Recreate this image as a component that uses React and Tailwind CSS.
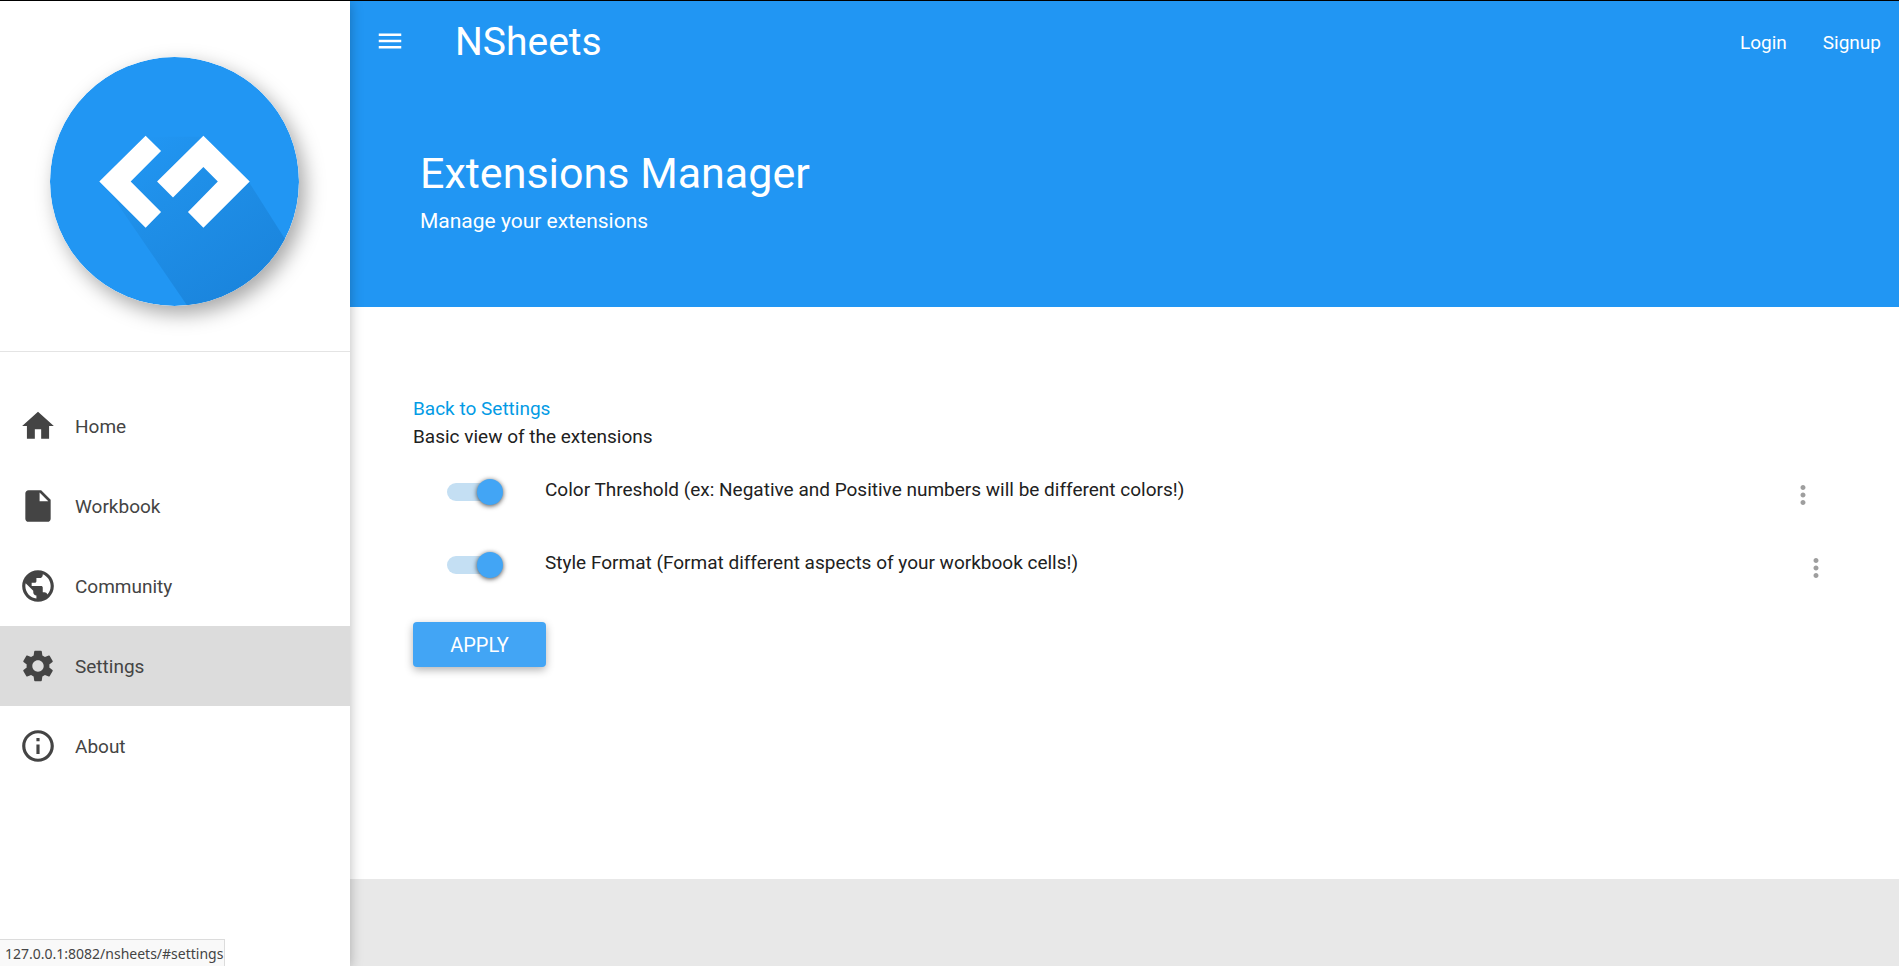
import {
  MdHome,
  MdInsertDriveFile,
  MdPublic,
  MdSettings,
  MdInfoOutline,
  MdMenu,
  MdMoreVert,
} from "react-icons/md";

const NAV_ITEMS = [
  { label: "Home", href: "#home", Icon: MdHome },
  { label: "Workbook", href: "#workbook", Icon: MdInsertDriveFile },
  { label: "Community", href: "#community", Icon: MdPublic },
  { label: "Settings", href: "#settings", Icon: MdSettings, active: true },
  { label: "About", href: "#about", Icon: MdInfoOutline },
];

const EXTENSIONS = [
  {
    id: "color-threshold",
    label: "Color Threshold (ex: Negative and Positive numbers will be different colors!)",
    inset: "pr-[81px]",
  },
  {
    id: "style-format",
    label: "Style Format (Format different aspects of your workbook cells!)",
    inset: "pr-[68px]",
  },
];

function Logo() {
  return (
    <svg viewBox="0 0 250 250" className="size-[249px] rounded-full shadow-[6px_8px_20px_rgba(0,0,0,0.35)]" role="img" aria-label="NSheets">
      <defs>
        <linearGradient id="fold" gradientUnits="userSpaceOnUse" x1="95" y1="78" x2="205" y2="240">
          <stop offset="0" stopColor="#2196f3" />
          <stop offset="0.35" stopColor="#1f8fe8" />
          <stop offset="1" stopColor="#1a84dc" />
        </linearGradient>
        <clipPath id="disc">
          <circle cx="125" cy="125" r="125" />
        </clipPath>
      </defs>
      <circle cx="125" cy="125" r="125" fill="#2196f3" />
      <path clipPath="url(#disc)" fill="url(#fold)" d="M96 80H154L200 126L250 205V250H138L60 136Z" />
      <path fill="#fff" d="M96 79L111.500 94.500L81 125L111.500 155.500L96 171.500L49.500 125Z" />
      <path fill="#fff" d="M154 79L200.500 125L154 171.500L138.500 155.500L168.500 125L154 110.500L123.500 141L107.500 125Z" />
    </svg>
  );
}

function Sidebar() {
  return (
    <aside className="relative z-10 w-[350px] shrink-0 bg-white shadow-[0_2px_12px_rgba(0,0,0,0.28)]">
      <div className="flex border-b border-[#e4e4e4] pt-14 pb-[45px] pl-[50px]">
        <Logo />
      </div>
      <nav className="pt-[34px]">
        <ul>
          {NAV_ITEMS.map(({ label, href, Icon, active }) => (
            <li key={label}>
              <a
                href={href}
                aria-current={active ? "page" : undefined}
                className={
                  active
                    ? "flex h-20 items-center gap-[18px] bg-[#dcdcdc] px-[19px] text-[19px] text-[#444]"
                    : "flex h-20 items-center gap-[18px] px-[19px] text-[19px] text-[#444]"
                }
              >
                <Icon className="size-[38px]" />
                <span className="pt-0.5">{label}</span>
              </a>
            </li>
          ))}
        </ul>
      </nav>
    </aside>
  );
}

function Header() {
  return (
    <header className="bg-[#2196f3] pb-[72px] text-white">
      <div className="flex h-20 items-center pr-[18px] pl-[25px]">
        <button type="button" aria-label="Toggle menu">
          <MdMenu className="size-[30px]" />
        </button>
        <a href="#home" className="ml-[50px] pt-0.5 text-[39px] leading-[48px]">
          NSheets
        </a>
        <div className="ml-auto flex gap-9 pt-1 text-[19px]">
          <a href="#login">Login</a>
          <a href="#signup">Signup</a>
        </div>
      </div>
      <div className="px-[70px] pt-[66px]">
        <h1 className="text-[43px] leading-[52px]">Extensions Manager</h1>
        <p className="mt-2 text-[21px] leading-7">Manage your extensions</p>
      </div>
    </header>
  );
}

function Switch({ id }) {
  return (
    <input
      id={id}
      type="checkbox"
      role="switch"
      defaultChecked
      className="relative h-[18px] w-[50px] shrink-0 appearance-none rounded-full bg-[#c2c2c2] before:absolute before:-top-1 before:-left-1 before:size-[26px] before:rounded-full before:bg-[#f1f1f1] before:shadow-[0_1px_5px_rgba(0,0,0,0.7)] checked:bg-[#c4dff3] checked:before:left-[30px] checked:before:bg-[#42a5f5]"
    />
  );
}

function ExtensionRow({ id, label, inset }) {
  return (
    <li className={`flex h-[73px] items-center pl-[34px] ${inset}`}>
      <Switch id={id} />
      <label htmlFor={id} className="mb-1 ml-12">
        {label}
      </label>
      <button type="button" aria-label="More options" className="mt-[6px] ml-auto text-[#9e9e9e]">
        <MdMoreVert className="size-[30px]" />
      </button>
    </li>
  );
}

export default function App() {
  return (
    <div className="flex min-h-screen border-t border-black bg-[#e8e8e8] font-[Roboto,sans-serif] text-[19px] text-[#212121]">
      <Sidebar />
      <div className="min-w-0 grow">
        <Header />
        <main className="bg-white pt-[88px] pb-[212px] pl-[63px] leading-7">
          <a href="#settings" className="text-[#039be5]">
            Back to Settings
          </a>
          <p>Basic view of the extensions</p>
          <ul className="pt-1">
            {EXTENSIONS.map((extension) => (
              <ExtensionRow key={extension.id} {...extension} />
            ))}
          </ul>
          <button
            type="button"
            className="mt-[21px] h-[45px] w-[133px] rounded-sm bg-[#42a5f5] text-xl text-white uppercase shadow-[0_3px_8px_rgba(0,0,0,0.3)]"
          >
            Apply
          </button>
        </main>
      </div>
      <div className="fixed bottom-0 left-0 z-20 border-t border-r border-[#dcdcdc] bg-[#f9f9f9] pt-0.5 pr-px pl-[5px] font-['Noto_Sans',sans-serif] text-sm leading-6 text-[#444]">
        127.0.0.1:8082/nsheets/#settings
      </div>
    </div>
  );
}
